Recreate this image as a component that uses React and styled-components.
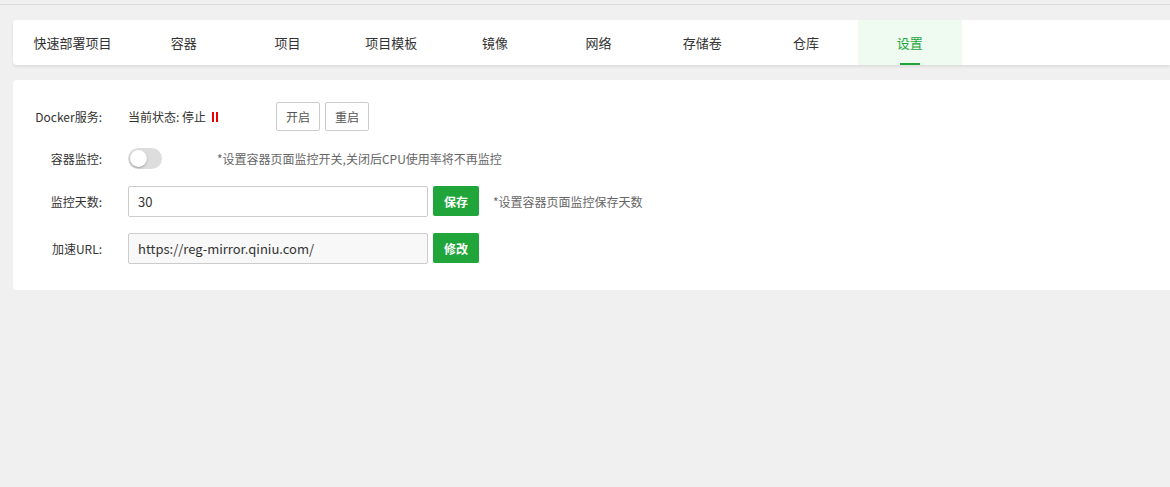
import React from "react";
import styled, { createGlobalStyle } from "styled-components";

const Global = createGlobalStyle`
  html,body{margin:0;background:#f0f0f0;font-family:"Microsoft YaHei","Noto Sans CJK SC","Liberation Sans",sans-serif;font-size:12px;color:#333;}
`;
const Page = styled.div`
  border-top:1px solid #dcdcdc;margin-top:4px;padding:15px 0 0 13px;display:flex;flex-direction:column;gap:15px;height:470px;box-sizing:border-box;
`;
const TabBar = styled.div`
  background:#fff;height:45px;display:flex;border-radius:4px 0 0 4px;box-shadow:0 2px 3px rgba(0,0,0,0.08);
`;
const Tab = styled.div`
  width:${p=>p.w}px;display:flex;align-items:center;justify-content:center;position:relative;font-size:13px;
  color:${p=>p.active?"#20a53a":"#333"};background:${p=>p.active?"#effaf1":"transparent"};
  ${p=>p.active&&`&::after{content:"";position:absolute;bottom:0;left:50%;margin-left:-10px;width:20px;height:2px;background:#20a53a;}`}
`;
const Card = styled.div`
  background:#fff;border-radius:4px 0 0 4px;padding:18px 0 14px;display:flex;flex-direction:column;gap:0;
`;
const Row = styled.div`display:flex;align-items:center;height:${p=>p.h}px;`;
const Label = styled.div`width:89px;text-align:right;padding-right:26px;flex:none;`;
const Status = styled.span`display:flex;align-items:center;gap:6px;width:148px;`;
const Pause = styled.span`display:inline-flex;gap:2px;span{width:2px;height:10px;background:#e00;}`;
const Btn = styled.button`
  height:29px;padding:0 9px;border:1px solid #ccc;background:#fff;border-radius:2px;font:inherit;font-size:12px;color:#555;margin-right:5px;
`;
const Green = styled.button`
  height:30px;width:46px;border:none;background:#20a53a;color:#fff;border-radius:2px;font:inherit;font-weight:bold;font-size:12px;margin-left:5px;
`;
const Toggle = styled.div`
  width:34px;height:21px;border-radius:11px;background:#ddd;position:relative;margin-right:55px;
  &::after{content:"";position:absolute;left:2px;top:2px;width:17px;height:17px;border-radius:50%;background:#fff;box-shadow:0 1px 2px rgba(0,0,0,.3);}
`;
const Note = styled.span`color:#666;margin-left:${p=>p.ml||0}px;`;
const Input = styled.div`
  width:289px;height:29px;border:1px solid #ccc;border-radius:2px;background:${p=>p.bg||"#fff"};display:flex;align-items:center;padding-left:9px;font-size:13px;color:#333;
`;

export default function App(){
  const tabs=["快速部署项目","容器","项目","项目模板","镜像","网络","存储卷","仓库","设置"];
  return <>
    <Global/>
    <Page>
      <TabBar>
        {tabs.map((t,i)=><Tab key={t} w={i===0?119:103.7} active={i===8}>{t}</Tab>)}
      </TabBar>
      <Card>
        <Row h={37}>
          <Label>Docker服务:</Label>
          <Status>当前状态: 停止 <Pause><span/><span/></Pause></Status>
          <Btn>开启</Btn><Btn>重启</Btn>
        </Row>
        <Row h={47}>
          <Label>容器监控:</Label>
          <Toggle/>
          <Note>*设置容器页面监控开关,关闭后CPU使用率将不再监控</Note>
        </Row>
        <Row h={38}>
          <Label>监控天数:</Label>
          <Input>30</Input>
          <Green>保存</Green>
          <Note ml={14}>*设置容器页面监控保存天数</Note>
        </Row>
        <Row h={56}>
          <Label>加速URL:</Label>
          <Input bg="#f8f8f8">https://reg-mirror.qiniu.com/</Input>
          <Green>修改</Green>
        </Row>
      </Card>
    </Page>
  </>;
}
